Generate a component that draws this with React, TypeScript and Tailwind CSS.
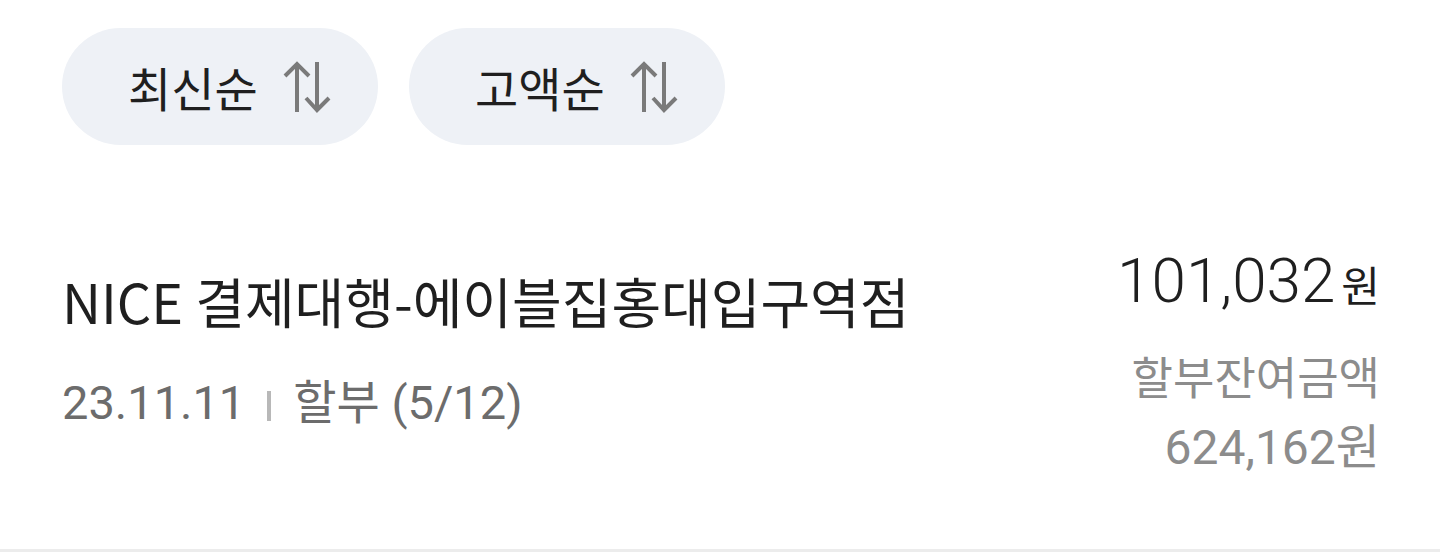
import { useState } from 'react';

const sorts = [
    { label: '최신순' },
    { label: '고액순' },
];

const payments = [
    {
        name: 'NICE 결제대행-에이블집홍대입구역점',
        date: '23.11.11',
        type: '할부 (5/12)',
        amount: '101,032',
        remainLabel: '할부잔여금액',
        remain: '624,162',
    },
];

function SortIcon() {
    return (
        <svg width="50" height="54" viewBox="0 0 50 54" fill="none" stroke="#7a7a7a" strokeWidth="4" strokeLinecap="butt" strokeLinejoin="miter">
            <path d="M15 4 V52" />
            <path d="M3 16 L15 4 L27 16" />
            <path d="M35 2 V50" />
            <path d="M24 38 L35 50 L47 38" />
        </svg>
    );
}

export default function App() {
    const [active, setActive] = useState(0);

    return (
        <div className="w-full min-h-screen bg-white font-['Roboto','Noto_Sans_CJK_KR',sans-serif]">
            <div className="flex gap-[31px] pl-[62px] pt-[28px]">
                {sorts.map((sort, index) => (
                    <button
                        key={`sort_${index}`}
                        onClick={() => setActive(index)}
                        className={"flex h-[117px] w-[316px] items-center gap-[24px] rounded-full bg-[#eef1f6] pl-[66px] " + (active === index ? 'text-[#1f1f1f]' : 'text-[#1f1f1f]')}
                    >
                        <span className="font-['Noto_Sans_CJK_KR',sans-serif] text-[47px] leading-none">{sort.label}</span>
                        <SortIcon />
                    </button>
                ))}
            </div>

            {payments.map((item, index) => (
                <div key={`pay_${index}`} className="flex items-start justify-between border-b-[3px] border-[#ececec] pb-[67px] pl-[62px] pr-[60px] pt-[106px]">
                    <div className="pt-[20px]">
                        <div className="font-['Noto_Sans_CJK_KR',sans-serif] text-[54px] leading-[60px] text-[#1f1f1f]">{item.name}</div>
                        <div className="mt-[42px] flex items-center text-[47px] leading-[60px] text-[#6c6c6c]">
                            <span>{item.date}</span>
                            <span className="mx-[22px] mt-[6px] h-[30px] w-[4px] bg-[#b8b8b8]" />
                            <span>{item.type}</span>
                        </div>
                    </div>
                    <div className="flex flex-col items-end">
                        <div className="flex items-baseline leading-[60px] text-[#1f1f1f]">
                            <span className="text-[62px] font-light">{item.amount}</span>
                            <span className="ml-[6px] font-['Noto_Sans_CJK_KR',sans-serif] text-[42px]">원</span>
                        </div>
                        <div className="mt-[32px] text-[45px] leading-[68px] text-[#8c8c8c]">{item.remainLabel}</div>
                        <div className="text-[48px] leading-[68px] text-[#8c8c8c]">{item.remain}원</div>
                    </div>
                </div>
            ))}
        </div>
    );
}
